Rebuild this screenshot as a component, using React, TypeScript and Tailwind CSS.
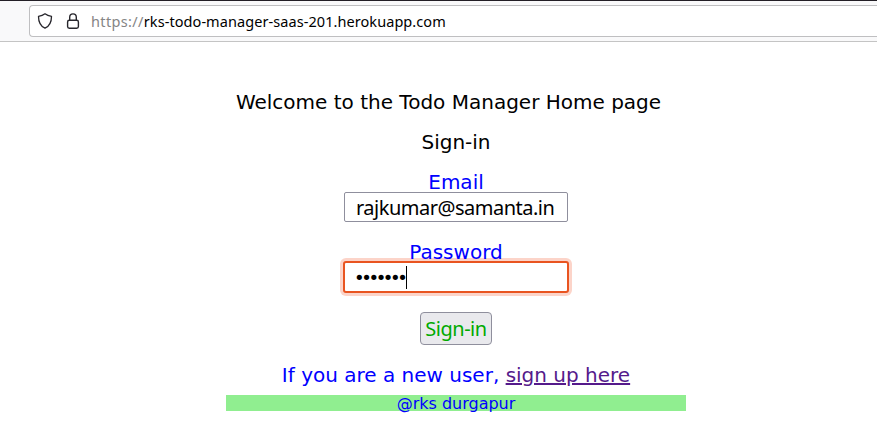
function AddressBar() {
  return (
    <header className="flex h-[42px] border-t border-b border-t-[#231f26] border-b-[#c4c4c4] bg-[#f9f9fa] pt-1 pl-[29px] shadow-none">
      <div className="flex h-8 flex-1 items-center rounded-l border border-r-0 border-[#bfbfc1] bg-white pl-[7px]">
        <svg width="16" height="16" viewBox="0 0 16 16" fill="none" stroke="#27262c" strokeWidth="1.3" strokeLinejoin="round">
          <path d="M8 .8C6.2 2.200 4 3 1.500 3.400c0 5 1.200 9.300 6.500 11.800C13.300 12.700 14.500 8.400 14.500 3.400 12 3 9.800 2.200 8 .8Z" />
        </svg>
        <svg className="ml-3" width="16" height="16" viewBox="0 0 16 16" fill="none" stroke="#27262c" strokeWidth="1.4">
          <path d="M4.700 7.300V4.200a3.300 3.300 0 0 1 6.600 0v3.100" />
          <rect x="2.600" y="7.200" width="10.800" height="8.100" rx="1.700" />
        </svg>
        <div className="ml-[10px] font-['Noto_Sans',sans-serif] text-[14.5px] leading-5 whitespace-nowrap text-black">
          <span className="tracking-[0.35px] text-[#858585]">https://</span>
          <span className="tracking-[0.07px]">rks-todo-manager-saas-201.herokuapp.com</span>
        </div>
      </div>
    </header>
  );
}

export default function App() {
  return (
    <div className="h-[432px] w-[877px] overflow-hidden bg-white font-['DejaVu_Sans',sans-serif] text-xl">
      <AddressBar />
      <main className="ml-[226px] flex w-[460px] flex-col items-center pt-[50px] text-black">
        <h1 className="mr-[15px] h-5 leading-5 whitespace-nowrap">Welcome to the Todo Manager Home page</h1>
        <h2 className="mt-5 h-5 leading-5">Sign-in</h2>
        <label className="mt-5 h-5 leading-5 text-[#0000ff]">Email</label>
        <div className="flex h-[30px] w-56 items-center rounded-[2px] border border-[#8f8f9d] bg-white pt-0.5 pl-[11px] font-['Noto_Sans',sans-serif] text-[20px] leading-7 tracking-[-0.5px]">
          rajkumar@samanta.in
        </div>
        <label className="z-10 mt-5 h-[19px] leading-5 text-[#0000ff]">Password</label>
        <div className="flex h-8 w-[226px] items-center rounded-[3px] border-2 border-[#e95420] bg-white pl-[9px] shadow-[0_0_0_3px_#fcd4c9]">
          <span className="w-[52px] pt-0.5 text-[18px] leading-6 tracking-[-3.4px] whitespace-nowrap">•••••••</span>
          <span className="h-[23px] w-px bg-black" />
        </div>
        <button className="mt-[19px] h-[33px] w-[72px] rounded-[4px] border border-[#8f8f9d] bg-[#e9e9ed] font-['Noto_Sans',sans-serif] text-[20px] leading-7 tracking-[-0.5px] whitespace-nowrap text-[#00aa00]">
          Sign-in
        </button>
        <p className="mt-5 h-5 leading-5 whitespace-nowrap text-[#0000ff]">
          If you are a new user,{" "}
          <a href="#signup" className="text-[#551a8b] underline">sign up here</a>
        </p>
        <footer className="mt-[10px] h-4 w-full bg-[#90ee90] text-center text-base leading-[18px] text-[#0000ff]">
          @rks durgapur
        </footer>
      </main>
    </div>
  );
}
